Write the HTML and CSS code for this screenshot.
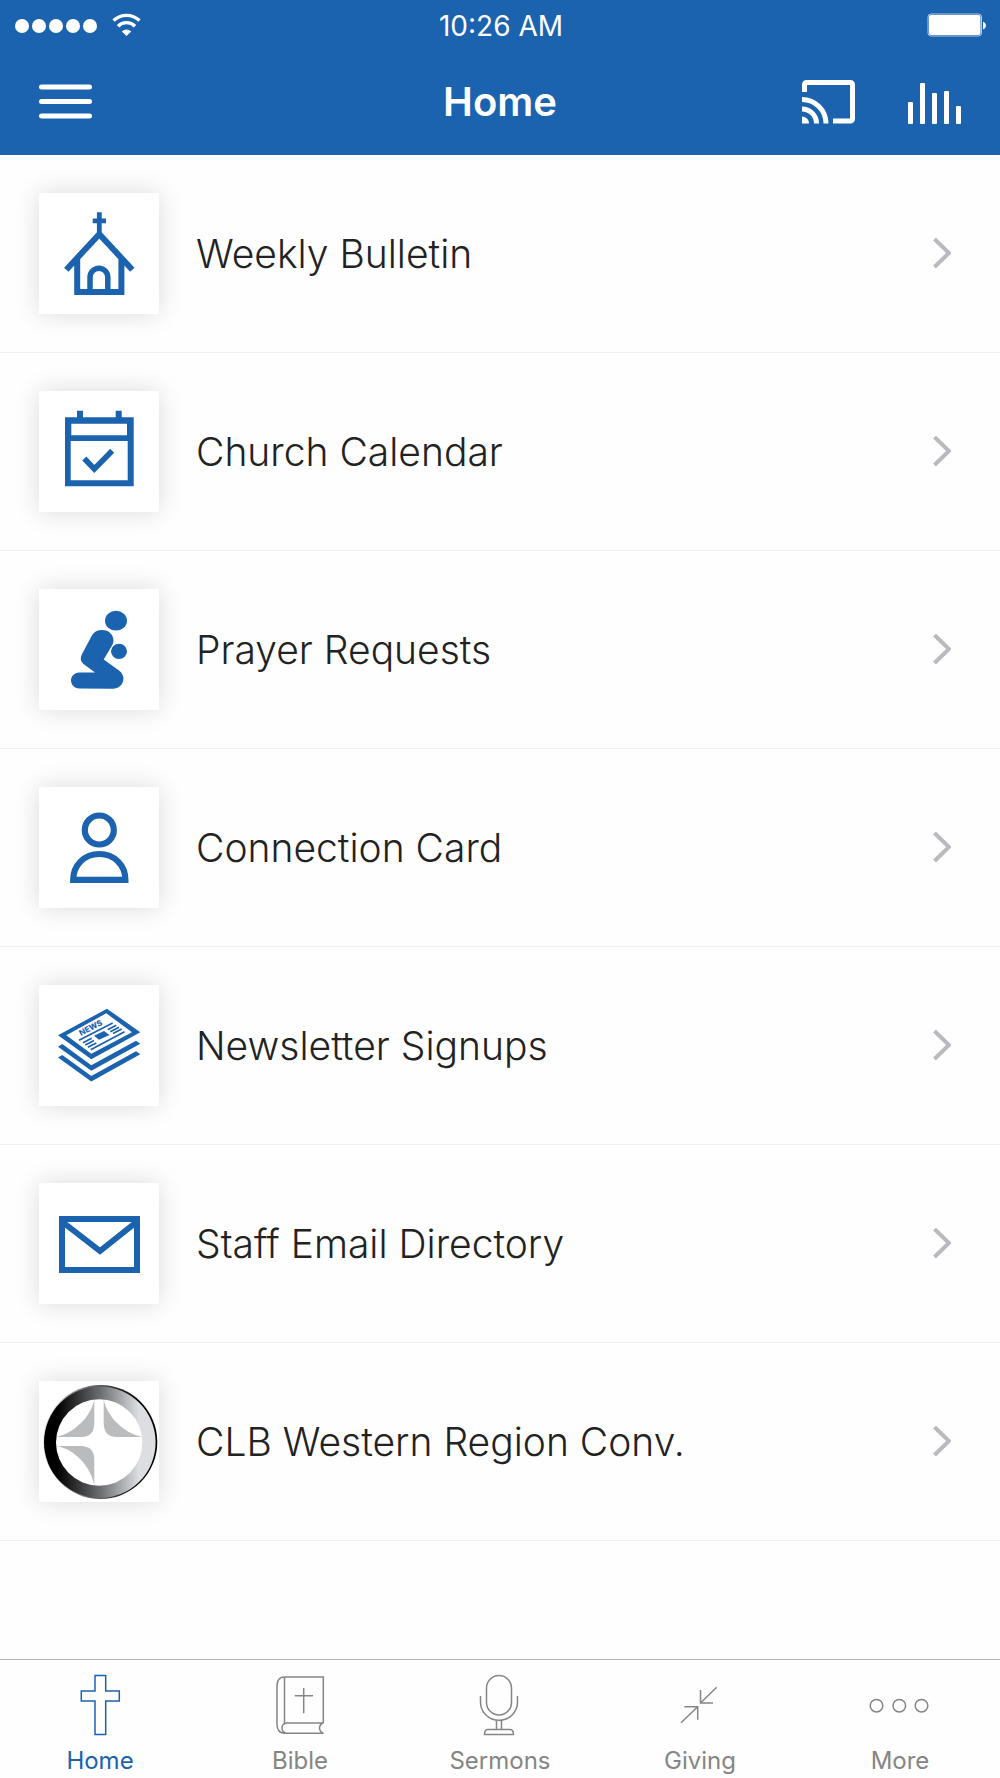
FILE: index.html
```html
<!DOCTYPE html>
<html lang="en">
<head>
<meta charset="utf-8">
<meta name="viewport" content="width=device-width, initial-scale=1">
<title>Home</title>
<link rel="stylesheet" href="styles.css">
</head>
<body>
<div class="app">
  <header class="header">
    <div class="status">
      <div class="status-left">
        <svg width="130" height="30" viewBox="0 0 130 30" fill="#fff" aria-hidden="true">
          <circle cx="7" cy="16" r="7"/><circle cx="24" cy="16" r="7"/><circle cx="41" cy="16" r="7"/><circle cx="58" cy="16" r="7"/><circle cx="75" cy="16" r="7"/>
          <g fill="none" stroke="#fff" stroke-width="3.4"><path d="M98.500 10.500a19 19 0 0 1 26 0"/><path d="M103 16.200a12 12 0 0 1 17 0"/></g>
          <path d="M106.800 21.400a7 7 0 0 1 9.400 0l-4.700 4.600z"/>
        </svg>
      </div>
      <time class="clock">10:26 AM</time>
      <div class="status-right">
        <svg width="60" height="26" viewBox="0 0 60 26" aria-hidden="true">
          <rect x="1" y="2" width="53.500" height="22" rx="3" fill="none" stroke="#b4cbe6" stroke-width="1"/>
          <rect x="2" y="3" width="51.500" height="20" rx="2" fill="#fff"/>
          <path d="M56 9.500q3 1.500 3 4t-3 4z" fill="#fff"/>
        </svg>
      </div>
    </div>
    <div class="nav">
      <div class="nav-side">
        <button class="icon-button" type="button" aria-label="Menu">
          <svg width="54" height="44" viewBox="0 0 54 44" stroke="#fff" stroke-width="5" stroke-linecap="round"><path d="M2.500 7H50.500M2.500 21.500H50.500M2.500 36H50.500"/></svg>
        </button>
      </div>
      <h1 class="title">Home</h1>
      <div class="nav-side nav-end">
        <button class="icon-button" type="button" aria-label="Cast">
          <svg width="54" height="44" viewBox="0 0 54 44" fill="none" stroke="#fff" stroke-width="5"><path d="M3.500 12V4.500a2 2 0 0 1 2-2H49.500a2 2 0 0 1 2 2V39a2 2 0 0 1-2 2H32M1 19.500A24 24 0 0 1 25 43.500M1 29A14.500 14.500 0 0 1 15.500 43.500"/><path d="M1 36.500a7 7 0 0 1 7 7H1z" fill="#fff" stroke="none"/></svg>
        </button>
        <button class="icon-button" type="button" aria-label="Audio player">
          <svg width="54" height="44" viewBox="0 0 54 44" fill="#fff"><rect x="1" y="22" width="5" height="22" rx="1"/><rect x="13" y="3" width="5" height="41" rx="1"/><rect x="25" y="13" width="5" height="31" rx="1"/><rect x="37" y="11" width="5" height="33" rx="1"/><rect x="49" y="26" width="5" height="18" rx="1"/></svg>
        </button>
      </div>
    </div>
  </header>

  <main class="content">
    <ul class="list">
      <li><a class="row" href="#bulletin">
        <svg class="tile" viewBox="0 0 120 121" fill="none" stroke="#1b62af" stroke-width="6" aria-hidden="true">
          <path d="M60.300 19.300V42M53.700 27.800H67" stroke-width="4.800"/>
          <path d="M27.300 76.700L60.300 41.200L93.300 76.700M38.200 64V99H82.400V64"/>
          <path d="M51 99V84.500a8.900 9.300 0 0 1 17.800 0V99" stroke-width="5.500"/>
        </svg>
        <span class="label">Weekly Bulletin</span>
        <svg class="chevron" viewBox="0 0 18 32" aria-hidden="true"><path d="M1.500 1L16 15L1.500 29"/></svg>
      </a></li>
      <li><a class="row" href="#calendar">
        <svg class="tile" viewBox="0 0 120 121" aria-hidden="true">
          <path fill="#1b62af" fill-rule="evenodd" d="M26 26.300H38V19.700H44V26.300H76.700V19.700H82.700V26.300H94.700V95.300H26zM32.300 32.700V44.300H88V32.700zM31.700 50V89.300H88.700V50z"/>
          <path fill="none" stroke="#1b62af" stroke-width="5.600" d="M45.300 67.500L55.300 78L73.200 59.700"/>
        </svg>
        <span class="label">Church Calendar</span>
        <svg class="chevron" viewBox="0 0 18 32" aria-hidden="true"><path d="M1.500 1L16 15L1.500 29"/></svg>
      </a></li>
      <li><a class="row" href="#prayer">
        <svg class="tile" viewBox="0 0 120 121" fill="#1b62af" aria-hidden="true">
          <ellipse cx="77" cy="31.700" rx="11" ry="9.900"/><ellipse cx="80" cy="62.300" rx="8" ry="7.600"/>
          <path d="M53 46.300Q56 41 63.300 41C70 41 74.500 46 74.500 51.500Q74.500 54 73 56.500L64.700 70.500L80 81.500Q84.500 85 84.400 90C84 96 79.500 99.700 74 99.700L40.300 99.500C35 99.300 32 95.500 32 91.300S35.500 83.500 40.300 83.400H56L44.500 75Q40 71 42.800 65.500z"/>
        </svg>
        <span class="label">Prayer Requests</span>
        <svg class="chevron" viewBox="0 0 18 32" aria-hidden="true"><path d="M1.500 1L16 15L1.500 29"/></svg>
      </a></li>
      <li><a class="row" href="#connect">
        <svg class="tile" viewBox="0 0 120 121" fill="none" stroke="#1b62af" stroke-width="6.200" aria-hidden="true">
          <circle cx="60.300" cy="43" r="14.500"/><path d="M34.200 92.900C34.200 78 45.500 67 60.300 67S86.400 78 86.400 92.900z"/>
        </svg>
        <span class="label">Connection Card</span>
        <svg class="chevron" viewBox="0 0 18 32" aria-hidden="true"><path d="M1.500 1L16 15L1.500 29"/></svg>
      </a></li>
      <li><a class="row" href="#newsletter">
        <svg class="tile" viewBox="0 0 120 121" fill="#1b62af" aria-hidden="true">
          <path fill-rule="evenodd" d="M19 50.300L68 23.700L101.300 47.300L52.300 74.300zM27.300 50.300L52.300 68.700L93 47.300L67.300 28.300z"/>
          <path d="M19 61.700L23.300 59L52.300 80.300L97 55.700L101.300 58.700L52.300 85.700zM19 72.500L23.300 70L52.300 91L97 66.300L101.300 69.300L52.300 96.500zM55 50.700L65 46L70.500 50L60 54.700z"/>
          <path fill="none" stroke="#1b62af" stroke-width="1.700" d="M40 55.300L73.700 38M51.700 64.700L85.500 46.700M44 57.700L52.700 53.200M46.300 60L55 55.500M48.800 62.300L57.300 58M68.700 44.700L77.300 40.200M71.300 46.700L80 42.300M74 48.500L82.700 44"/>
          <text class="masthead" transform="translate(42 51) rotate(-28)">NEWS</text>
        </svg>
        <span class="label">Newsletter Signups</span>
        <svg class="chevron" viewBox="0 0 18 32" aria-hidden="true"><path d="M1.500 1L16 15L1.500 29"/></svg>
      </a></li>
      <li><a class="row" href="#staff">
        <svg class="tile" viewBox="0 0 120 121" fill="none" stroke="#1b62af" stroke-width="6" aria-hidden="true">
          <path d="M23 36H98V87H23zM23.500 39L61 68L97.500 39"/>
        </svg>
        <span class="label">Staff Email Directory</span>
        <svg class="chevron" viewBox="0 0 18 32" aria-hidden="true"><path d="M1.500 1L16 15L1.500 29"/></svg>
      </a></li>
      <li><a class="row" href="#convention">
        <svg class="tile" viewBox="0 0 120 121" aria-hidden="true">
          <defs>
            <linearGradient id="ring"><stop offset=".12" stop-color="#000"/><stop offset=".5" stop-color="#6b6c70"/><stop offset=".85" stop-color="#dcdee2"/></linearGradient>
            <linearGradient id="rim"><stop offset="0" stop-color="#ddd"/><stop offset=".5" stop-color="#555"/><stop offset=".85" stop-color="#000"/></linearGradient>
          </defs>
          <circle cx="61.300" cy="61" r="57" fill="url(#rim)"/>
          <circle cx="60.800" cy="61.300" r="55.800" fill="url(#ring)"/>
          <circle cx="60.200" cy="61.500" r="43.200" fill="#fff"/>
          <path fill="#b9bbbd" d="M55.300 18.800V42Q55.300 56 42 56H17.500C34 52 51 38 55.300 18.800zM64.700 18.800V42Q64.700 56 78 56H103C86 52 69 38 64.700 18.800zM17.500 65H42Q55.300 65 55.300 79V104C51 84 35 68 17.500 65z"/>
        </svg>
        <span class="label">CLB Western Region Conv.</span>
        <svg class="chevron" viewBox="0 0 18 32" aria-hidden="true"><path d="M1.500 1L16 15L1.500 29"/></svg>
      </a></li>
    </ul>
  </main>

  <nav class="tabs" aria-label="Sections">
    <a class="tab active" href="#home" aria-current="page">
      <svg viewBox="0 0 60 62" aria-hidden="true"><path d="M25 1.500H35.700V17H49.300V27H35.700V60.500H25V27H11.300V17H25z"/></svg>
      <span>Home</span>
    </a>
    <a class="tab" href="#bible">
      <svg viewBox="0 0 60 62" aria-hidden="true"><path d="M53.300 49V3H14.500Q7 3 7 12V50Q7 59.300 15 59.300H53.500M14.500 3V49M53.300 49H17Q12 49.500 12 54T17 59.300M53.300 49Q49.500 50.500 49.500 54T53.300 59.300M33.700 14V39.300M24.700 21.700H43"/></svg>
      <span>Bible</span>
    </a>
    <a class="tab" href="#sermons">
      <svg viewBox="0 0 60 62" aria-hidden="true"><rect x="16.500" y="1.500" width="25" height="39.500" rx="12.500"/><path d="M10.500 22V28A18.500 18.300 0 0 0 47.500 28V22M26.500 46.500V55.500M31.500 46.500V55.500M14.500 60.500Q14.500 55.500 18 55.500H40Q43.500 55.500 43.500 60.500z"/></svg>
      <span>Sermons</span>
    </a>
    <a class="tab" href="#giving">
      <svg viewBox="0 0 60 62" aria-hidden="true"><path d="M46.700 13.300L30.500 29M30.500 16V29H43M11 48.700L27.700 32.700M14.300 32.700H27.700V45.700"/></svg>
      <span>Giving</span>
    </a>
    <a class="tab" href="#more">
      <svg viewBox="0 0 60 62" aria-hidden="true"><circle cx="6.500" cy="31.700" r="6.300"/><circle cx="29.300" cy="31.700" r="6.300"/><circle cx="51.500" cy="31.700" r="6.300"/></svg>
      <span>More</span>
    </a>
  </nav>
</div>
</body>
</html>
```
FILE: styles.css
```css
* {
  box-sizing: border-box;
}

body {
  margin: 0;
  background: #fefefe;
  color: #222;
  font-family: Inter, "Liberation Sans", sans-serif;
}

svg {
  display: block;
  flex: none;
}

.app {
  display: flex;
  flex-direction: column;
  min-height: 100vh;
}

.header {
  background: #1b62af;
  color: #fff;
}

.status {
  display: grid;
  grid-template-columns: 1fr auto 1fr;
  align-items: center;
  height: 50px;
  padding: 0 13px 0 15px;
}

.status-right {
  justify-self: end;
}

.clock {
  font-size: 28px;
  line-height: 48px;
  padding-top: 2px;
}

.nav {
  display: grid;
  grid-template-columns: 1fr auto 1fr;
  align-items: center;
  height: 105px;
  padding: 0 39px 2px;
}

.nav-side {
  display: flex;
  gap: 52px;
}

.nav-end {
  justify-content: flex-end;
}

.icon-button {
  padding: 0;
  border: 0;
  background: none;
  cursor: pointer;
}

.title {
  margin: 0;
  font-size: 40px;
  font-weight: 600;
  line-height: 48px;
}

.content {
  flex: 1;
}

.list {
  margin: 0;
  padding: 0;
  list-style: none;
}

.row {
  display: flex;
  align-items: center;
  gap: 37px;
  padding: 38px 49px 38px 39px;
  border-bottom: 1px solid #efeff0;
  color: inherit;
  text-decoration: none;
}

.tile {
  width: 120px;
  height: 121px;
  background: #fff;
  box-shadow: 0 0 24px rgba(0, 0, 0, 0.14);
}

.masthead {
  font-size: 8px;
  font-weight: 800;
}

.label {
  flex: 1;
  font-size: 39px;
  font-weight: 300;
  line-height: 50px;
}

.chevron {
  width: 18px;
  height: 32px;
  fill: none;
  stroke: #b9b9be;
  stroke-width: 4;
}

.tabs {
  display: grid;
  grid-template-columns: repeat(5, 1fr);
  border-top: 1px solid #b5b5b5;
}

.tab {
  display: flex;
  flex-direction: column;
  align-items: center;
  gap: 10px;
  padding: 14px 0 2px;
  color: #858585;
  font-size: 24px;
  line-height: 30px;
  text-decoration: none;
}

.tab svg {
  width: 60px;
  height: 62px;
  overflow: visible;
  fill: none;
  stroke: currentColor;
  stroke-width: 1.5px;
}

.active {
  color: #1b62af;
}
```
